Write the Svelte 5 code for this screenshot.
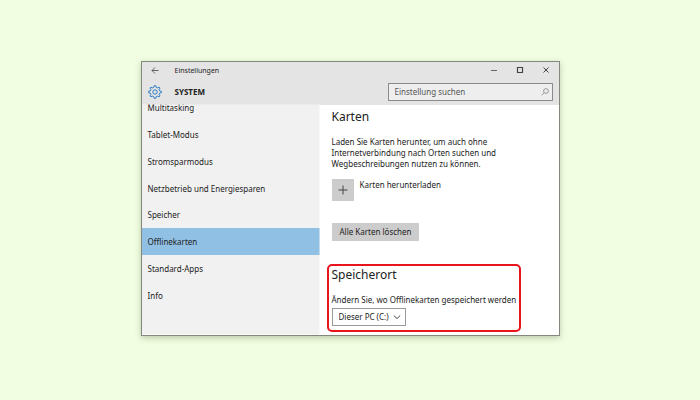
<script>
  const entries = [
    'Multitasking',
    'Tablet-Modus',
    'Stromsparmodus',
    'Netzbetrieb und Energiesparen',
    'Speicher',
    'Offlinekarten',
    'Standard-Apps',
    'Info',
  ];
  const drives = ['Dieser PC (C:)'];

  let active = $state('Offlinekarten');
  let drive = $state(drives[0]);
  let query = $state('');
</script>

<main>
  <div class="window">
    <header>
      <div class="titlebar">
        <button class="back" aria-label="Zurück">
          <svg width="8" height="8" viewBox="0 0 8 8"><path d="M7.5 4.5H1M4 1.5l-3 3 3 3" stroke-width="0.8" /></svg>
        </button>
        <span class="title">Einstellungen</span>
        <button class="control" aria-label="Minimieren">
          <svg width="8" height="8" viewBox="0 0 8 8"><path d="M1 4.5h6" stroke-width="0.8" /></svg>
        </button>
        <button class="control" aria-label="Maximieren">
          <svg width="8" height="8" viewBox="0 0 8 8"><path d="M1.5 1.5h5v5h-5z" stroke-width="1.2" /></svg>
        </button>
        <button class="control" aria-label="Schließen">
          <svg width="8" height="8" viewBox="0 0 8 8"><path d="M1.5 1.5l5 5M6.5 1.5l-5 5" /></svg>
        </button>
      </div>
      <div class="topbar">
        <svg class="gear" width="14" height="14" viewBox="0 0 14 14">
          <path d="M5.9 2.2L6.2.7h1.6l.3 1.5 1.6.7L11 2.1 12 3.1l-.9 1.3.6 1.5 1.6.3v1.6l-1.6.3-.6 1.5.9 1.3-1 1-1.3-.8-1.6.7-.3 1.5H6.2l-.3-1.5-1.6-.7-1.3.8-1-1 .9-1.3-.6-1.5L.7 7.8V6.2l1.6-.3.6-1.5L2 3.1l1-1 1.3.8z" />
          <circle cx="7" cy="7" r="2.2" />
        </svg>
        <h1>SYSTEM</h1>
        <label class="search">
          <input type="text" aria-label="Einstellung suchen" placeholder="Einstellung suchen" bind:value={query} />
          <svg width="8" height="8" viewBox="0 0 8 8"><circle cx="5" cy="3" r="2.4" /><path d="M3.3 4.7L.6 7.4" /></svg>
        </label>
      </div>
    </header>

    <div class="body">
      <nav>
        {#each entries as entry}
          <button class:active={entry === active} onclick={() => (active = entry)}>{entry}</button>
        {/each}
      </nav>

      <div class="content">
        <section class="maps">
          <h2>Karten</h2>
          <p>Laden Sie Karten herunter, um auch ohne Internetverbindung nach Orten suchen und Wegbeschreibungen nutzen zu können.</p>
          <button class="download">
            <span class="plus">
              <svg width="10" height="10" viewBox="0 0 10 10"><path d="M5 .5v9M.5 5h9" /></svg>
            </span>
            Karten herunterladen
          </button>
          <button class="clear">Alle Karten löschen</button>
        </section>

        <section class="storage">
          <h2>Speicherort</h2>
          <label for="drive">Ändern Sie, wo Offlinekarten gespeichert werden</label>
          <div class="select">
            <select id="drive" bind:value={drive}>
              {#each drives as d}
                <option>{d}</option>
              {/each}
            </select>
            <svg width="8" height="8" viewBox="0 0 8 8"><path d="M.8 2.5L4 5.6l3.2-3.1" /></svg>
          </div>
        </section>
      </div>
    </div>
  </div>
</main>

<style>
  :global(body) { background: #f2fee2; }
  main {
    box-sizing: border-box;
    min-height: 100vh;
    padding: 0 16px 4px;
    display: flex;
    align-items: center;
    justify-content: center;
    font: 8px/11px "Noto Sans", "Open Sans", sans-serif;
    color: #222;
  }
  .window {
    box-sizing: border-box;
    width: 100%;
    max-width: 419px;
    border: 1px solid #85887f;
    background: #fff;
    box-shadow: 0 2px 6px rgba(60, 80, 40, 0.3);
  }
  button, input, select {
    font: inherit;
    color: inherit;
    margin: 0;
    padding: 0;
    border: 0;
    background: none;
  }
  svg {
    fill: none;
    stroke: #444;
    flex: none;
  }
  h1, h2, p { margin: 0; }
  header { background: #e4e4e4; }
  .titlebar {
    display: flex;
    align-items: center;
    height: 17px;
    font-size: 7px;
  }
  .titlebar button {
    display: flex;
    align-items: center;
    justify-content: center;
    height: 17px;
    width: 26px;
  }
  .title { flex: 1; padding-left: 7px; }
  .topbar {
    display: flex;
    align-items: center;
    height: 26px;
    padding: 0 6px;
  }
  .gear { stroke: #2b7cc4; }
  h1 {
    flex: 1;
    margin-left: 13px;
    font-size: 8px;
  }
  .search {
    box-sizing: border-box;
    display: flex;
    align-items: center;
    width: 165px;
    height: 18px;
    padding: 0 3px 0 6px;
    border: 1px solid #8a8a8a;
    background: #eee;
  }
  .search input {
    flex: 1;
    min-width: 0;
    outline: none;
  }
  .search input::placeholder { color: #555; opacity: 1; }
  .search svg { stroke: #999; }
  .body { display: flex; }
  nav {
    display: grid;
    grid-auto-rows: 1fr;
    flex: 0 0 178px;
    /* the list is scrolled a little, its first entry sits under the header */
    margin-top: -10px;
    padding-bottom: 26px;
    clip-path: inset(10px 0 0);
    background: #f1f1f1;
  }
  nav button {
    padding-left: 6px;
    text-align: left;
  }
  nav .active { background: #91c0e5; }
  .content {
    flex: 1;
    padding: 3px 38px 3px 7px;
  }
  .maps { padding-left: 5px; }
  h2 {
    font-size: 12px;
    line-height: 18px;
    font-weight: 400;
  }
  .maps p { margin: 10px 0; }
  .download {
    display: flex;
    gap: 6px;
  }
  .plus {
    display: flex;
    align-items: center;
    justify-content: center;
    width: 22px;
    height: 22px;
    background: #ccc;
  }
  .clear {
    height: 18px;
    margin-top: 22px;
    padding: 0 8px;
    background: #ccc;
  }
  .storage {
    margin-top: 23px;
    padding: 0 0 4px 3px;
    border: 2px solid #e8151c;
    border-radius: 5px;
  }
  .storage label {
    display: block;
    margin: 10px 0 3px;
    white-space: nowrap;
  }
  .select {
    display: inline-flex;
    align-items: center;
    position: relative;
    vertical-align: top;
  }
  select {
    appearance: none;
    height: 18px;
    width: 74px;
    padding-left: 6px;
    border: 1px solid #999;
    background: #fff;
  }
  .select svg {
    position: absolute;
    right: 5px;
    pointer-events: none;
  }
</style>
